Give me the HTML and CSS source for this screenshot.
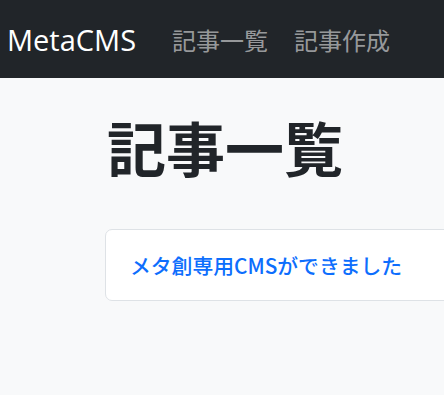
FILE: index.html
```html
<!DOCTYPE html>
<html lang="ja">
<head>
<meta charset="utf-8">
<link rel="stylesheet" href="styles.css">
</head>
<body>
<nav class="navbar">
  <a class="brand" href="#">MetaCMS</a>
  <ul class="nav">
    <li><a href="#">記事一覧</a></li>
    <li><a href="#">記事作成</a></li>
  </ul>
</nav>
<main class="main">
  <h1 class="title">記事一覧</h1>
  <div class="card">
    <a class="card-link" href="#">メタ創専用CMSができました</a>
  </div>
</main>
</body>
</html>
```
FILE: styles.css
```css
* { box-sizing: border-box; }
body {
  margin: 0;
  background: #f8f9fa;
  font-family: "Noto Sans CJK JP", "Noto Sans", sans-serif;
  color: #212529;
  overflow: hidden;
}
.navbar {
  height: 78px;
  background: #212529;
  display: flex;
  align-items: center;
  padding-left: 7px;
}
.brand {
  font-family: "Open Sans", "Noto Sans CJK JP", sans-serif;
  font-size: 29px;
  color: #fff;
  text-decoration: none;
  margin-right: 30px;
}
.nav {
  list-style: none;
  margin: 0;
  padding: 0;
  display: flex;
  gap: 14px;
}
.nav a {
  font-size: 24px;
  color: rgba(255,255,255,0.55);
  text-decoration: none;
  padding: 0 6px;
  display: block;
}
.main {
  padding-left: 105px;
  overflow: hidden;
}
.title {
  margin: 34px 0 0 2px;
  font-size: 59px;
  font-weight: 700;
  line-height: 1.2;
}
.card {
  margin-top: 46px;
  width: 400px;
  flex-shrink: 0;
  height: 72px;
  background: #fff;
  border: 1px solid #dee2e6;
  border-radius: 7px;
  display: flex;
  align-items: center;
  padding-left: 24px;
}
.card-link {
  color: #0d6efd;
  font-size: 20.8px;
  font-weight: 500;
  text-decoration: none;
}
```
